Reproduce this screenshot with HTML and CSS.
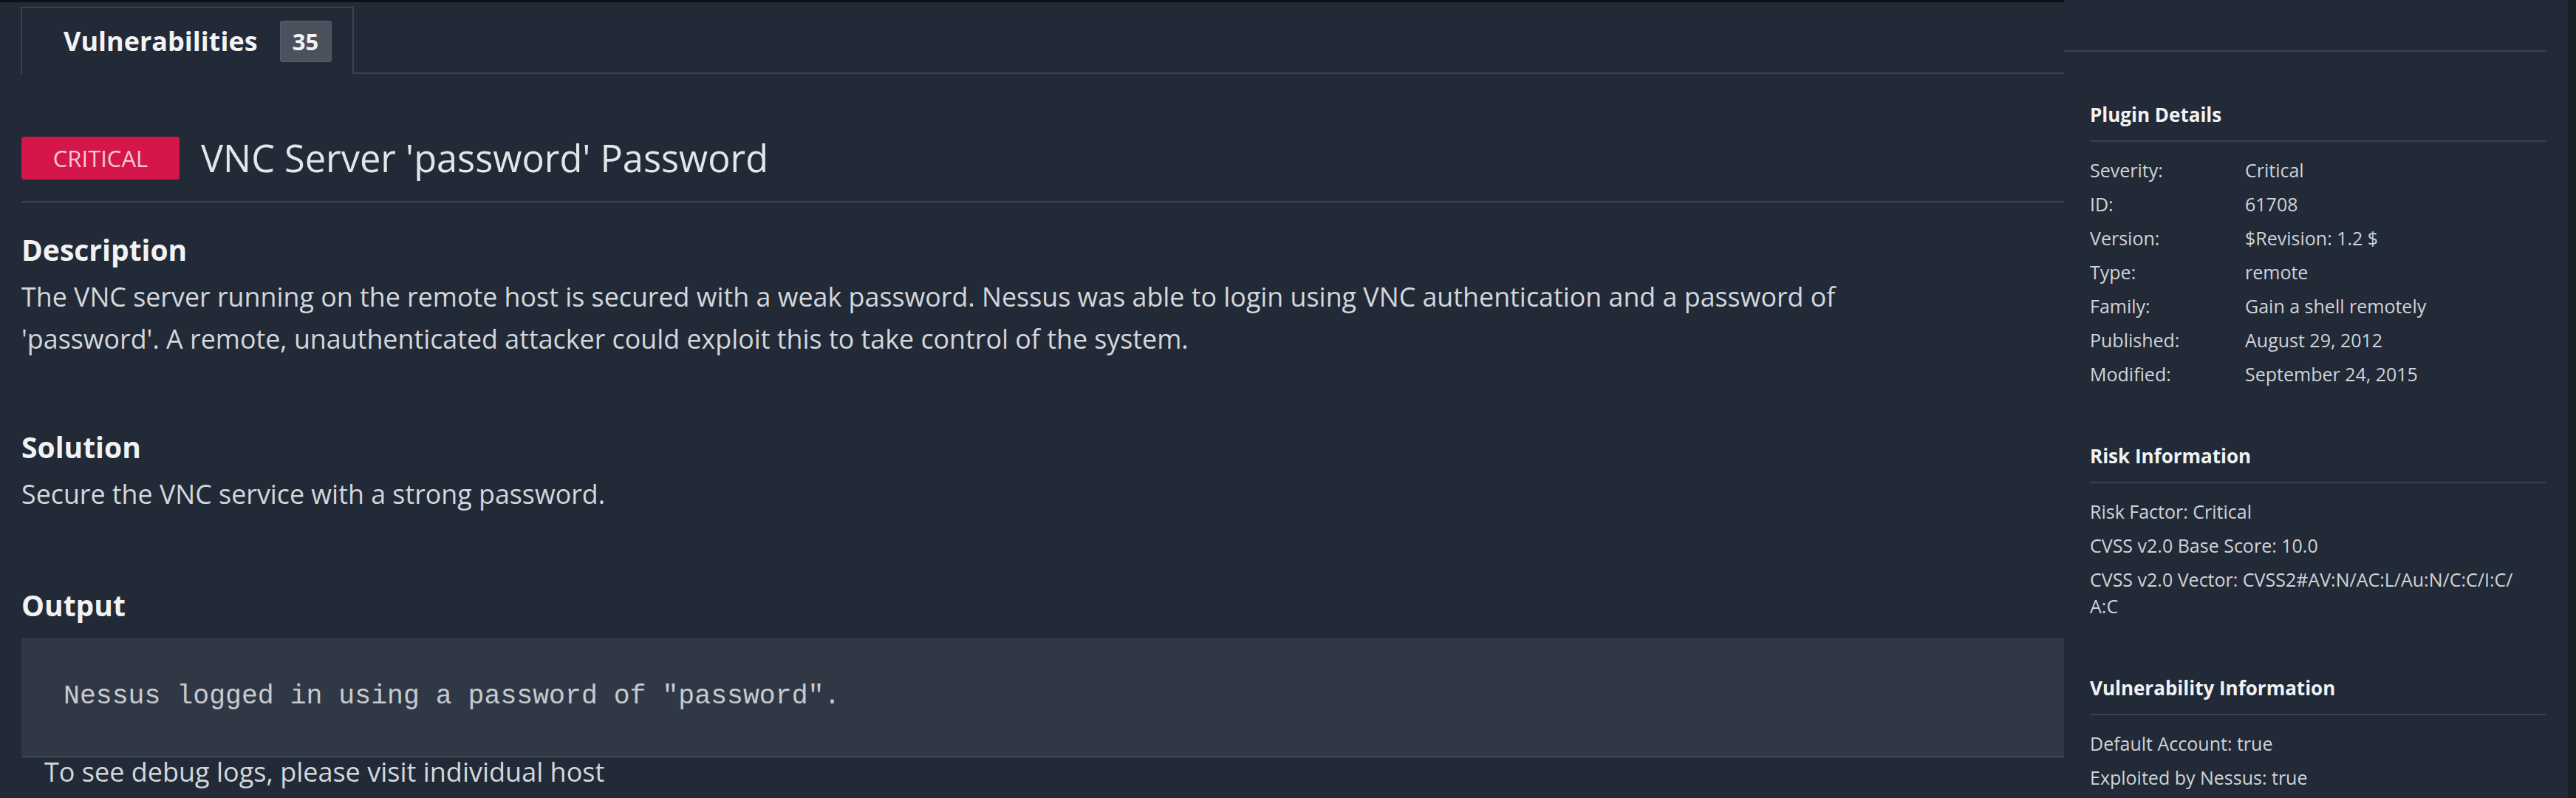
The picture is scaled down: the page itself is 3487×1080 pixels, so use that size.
FILE: index.html
```html
<!DOCTYPE html>
<html lang="en">
<head>
<meta charset="utf-8">
<title>VNC Server 'password' Password</title>
<link rel="stylesheet" href="styles.css">
</head>
<body>
<div class="app">
  <main class="main">
    <div class="tabs">
      <div class="tab"><span class="tab-label">Vulnerabilities</span><span class="count">35</span></div>
      <div class="tab-fill"></div>
    </div>
    <div class="title-row">
      <span class="sev">Critical</span>
      <h1 class="title">VNC Server 'password' Password</h1>
    </div>
    <section class="section desc">
      <h2>Description</h2>
      <p class="para">The VNC server running on the remote host is secured with a weak password. Nessus was able to login using VNC authentication and a password of 'password'. A remote, unauthenticated attacker could exploit this to take control of the system.</p>
    </section>
    <section class="section solution">
      <h2>Solution</h2>
      <p class="para">Secure the VNC service with a strong password.</p>
    </section>
    <section class="section output">
      <h2>Output</h2>
      <pre class="out-pre">Nessus logged in using a password of "password".</pre>
      <p class="debug">To see debug logs, please visit individual host</p>
    </section>
  </main>
  <aside class="sidebar">
    <div class="side-top"></div>
    <section class="side-section first">
      <h3>Plugin Details</h3>
      <ul class="kv">
        <li><span class="k">Severity:</span><span class="v">Critical</span></li>
        <li><span class="k">ID:</span><span class="v">61708</span></li>
        <li><span class="k">Version:</span><span class="v">$Revision: 1.2 $</span></li>
        <li><span class="k">Type:</span><span class="v">remote</span></li>
        <li><span class="k">Family:</span><span class="v">Gain a shell remotely</span></li>
        <li><span class="k">Published:</span><span class="v">August 29, 2012</span></li>
        <li><span class="k">Modified:</span><span class="v">September 24, 2015</span></li>
      </ul>
    </section>
    <section class="side-section">
      <h3>Risk Information</h3>
      <ul class="kv">
        <li>Risk Factor: Critical</li>
        <li>CVSS v2.0 Base Score: 10.0</li>
        <li>CVSS v2.0 Vector: CVSS2#AV:N/AC:L/Au:N/C:C/I:C/<br>A:C</li>
      </ul>
    </section>
    <section class="side-section">
      <h3>Vulnerability Information</h3>
      <ul class="kv">
        <li>Default Account: true</li>
        <li>Exploited by Nessus: true</li>
      </ul>
    </section>
  </aside>
  <div class="edge"></div>
</div>
</body>
</html>
```

FILE: styles.css
```css
* { box-sizing: border-box; }

html, body {
  margin: 0;
  padding: 0;
  background: #222a37;
  width: 3487px;
  height: 1080px;
  overflow: hidden;
  font-family: "Open Sans", "Noto Sans", "Liberation Sans", sans-serif;
  color: #d3d7dc;
}

.app {
  display: flex;
  height: 1080px;
}

/* ---------- main column ---------- */
.main {
  flex: 0 0 2794px;
  border-top: 3px solid #0c1016;
  padding-left: 29px;
}

.tabs {
  display: flex;
  margin-top: 6px;
  margin-left: -1px;
}

.tab {
  height: 91px;
  border: 2px solid #3a4250;
  border-bottom: none;
  padding: 0 28px 0 56px;
  display: flex;
  align-items: center;
  gap: 30px;
}

.tab-label {
  font-size: 36px;
  font-weight: 700;
  color: #f2f3f5;
  line-height: 50px;
}

.count {
  width: 70px;
  height: 56px;
  display: flex;
  align-items: center;
  justify-content: center;
  background: #4b515d;
  border: 1px solid #575e6a;
  border-radius: 3px;
  font-size: 31px;
  font-weight: 700;
  color: #f4f4f4;
}

.tab-fill {
  flex: 1;
  border-bottom: 2px solid #3a4250;
}

.title-row {
  display: flex;
  align-items: center;
  gap: 29px;
  margin-top: 85px;
  padding-bottom: 29px;
  border-bottom: 2px solid #3a4350;
}

.sev {
  width: 214px;
  height: 58px;
  display: flex;
  align-items: center;
  justify-content: center;
  background: #d5164b;
  border-radius: 4px;
  color: #f8c8d5;
  font-size: 31px;
  text-transform: uppercase;
}

.title {
  margin: 0;
  font-size: 50.5px;
  font-weight: 400;
  line-height: 58px;
  color: #e2e5e9;
}

.section h2 {
  margin: 0 0 10px;
  font-size: 39px;
  font-weight: 700;
  line-height: 50px;
  color: #f1f2f4;
}

.para {
  margin: 0;
  max-width: 2550px;
  font-size: 35.8px;
  line-height: 57px;
  color: #d3d7dc;
}

.desc { margin-top: 39px; }
.solution { margin-top: 93px; }
.output { margin-top: 97px; }
.output h2 { margin-bottom: 19px; }

.out-pre {
  margin: 0;
  padding: 60px 57px;
  background: #313845;
  border-bottom: 2px solid #434b58;
  font-family: "Courier New", "Liberation Mono", monospace;
  font-size: 36.5px;
  line-height: 40px;
  color: #c6cacf;
}

.debug {
  margin: 0;
  padding-left: 31px;
  font-size: 36px;
  line-height: 40px;
  color: #d3d7dc;
}

/* ---------- sidebar ---------- */
.sidebar {
  flex: 1;
  padding-right: 30px;
}

.side-top {
  height: 70px;
  border-bottom: 2px solid #3a4250;
}

.side-section {
  padding-left: 35px;
  margin-top: 75px;
}

.side-section.first { margin-top: 67px; }

.side-section h3 {
  margin: 0;
  padding-bottom: 17px;
  border-bottom: 2px solid #3a4250;
  font-size: 26px;
  font-weight: 700;
  line-height: 36px;
  color: #f1f2f4;
}

.kv {
  list-style: none;
  margin: 0;
  padding: 10px 0 0;
}

.kv li {
  display: flex;
  margin-top: 10px;
  font-size: 25px;
  line-height: 36px;
  color: #d0d3d8;
}

.kv li:not(:has(.k)) { display: block; }

.k {
  flex: 0 0 210px;
}

.edge {
  flex: 0 0 11px;
  background: #191e27;
}
```
